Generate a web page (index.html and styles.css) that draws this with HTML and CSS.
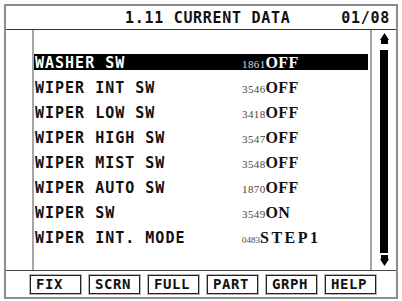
FILE: index.html
```html
<!DOCTYPE html>
<html lang="en">
<head>
    <meta charset="UTF-8">
    <title>Current Data</title>
    <link rel="stylesheet" href="styles.css">
</head>
<body>
    <div class="screen">
        <div class="header">
            <span class="title">1.11 CURRENT DATA</span>
            <span class="page">01/08</span>
        </div>

        <div class="middle">
            <div class="side"></div>

            <div class="list">
                <div class="row selected"><span class="label">WASHER SW</span><span class="value"><small>1861</small>OFF</span></div>
                <div class="row"><span class="label">WIPER INT SW</span><span class="value"><small>3546</small>OFF</span></div>
                <div class="row"><span class="label">WIPER LOW SW</span><span class="value"><small>3418</small>OFF</span></div>
                <div class="row"><span class="label">WIPER HIGH SW</span><span class="value"><small>3547</small>OFF</span></div>
                <div class="row"><span class="label">WIPER MIST SW</span><span class="value"><small>3548</small>OFF</span></div>
                <div class="row"><span class="label">WIPER AUTO SW</span><span class="value"><small>1870</small>OFF</span></div>
                <div class="row"><span class="label">WIPER SW</span><span class="value"><small>3549</small>ON</span></div>
                <div class="row"><span class="label">WIPER INT. MODE</span><span class="value"><small class="tiny">0483</small><span class="wide">STEP1</span></span></div>
            </div>

            <div class="scroll">
                <svg class="arrow" width="9" height="11" viewBox="0 0 9 11">
                    <polygon points="4.5,0 9,7 0,7" fill="#000"/>
                    <rect x="1" y="7" width="7" height="4" fill="#000"/>
                </svg>
                <div class="thumb"></div>
                <svg class="arrow" width="9" height="11" viewBox="0 0 9 11">
                    <rect x="1" y="0" width="7" height="4" fill="#000"/>
                    <polygon points="0,4 9,4 4.5,11" fill="#000"/>
                </svg>
            </div>
        </div>

        <div class="buttons">
            <span class="btn">FIX</span>
            <span class="btn">SCRN</span>
            <span class="btn">FULL</span>
            <span class="btn">PART</span>
            <span class="btn">GRPH</span>
            <span class="btn">HELP</span>
        </div>
    </div>
</body>
</html>
```

FILE: styles.css
```css
body {
    margin: 0;
    padding: 0;
    background: #fff;
    font-family: "DejaVu Sans Mono", monospace;
}
.screen {
    margin: 4px;
    width: 390px;
    height: 291px;
    border: 2px solid #8c8c8c;
    display: flex;
    flex-direction: column;
}
.header {
    height: 23px;
    border-bottom: 1px solid #333;
    display: flex;
    align-items: center;
    padding: 0 6px 0 119px;
    font-weight: bold;
    font-size: 15px;
    letter-spacing: 0.7px;
    color: #111;
}
.header .title {
    flex: 1;
}
.middle {
    height: 240px;
    display: flex;
}
.side {
    width: 26px;
    border-right: 2px solid #a5a5a5;
}
.list {
    flex: 1;
    padding: 24px 2px 0 0;
    display: flex;
    flex-direction: column;
    gap: 9px;
}
.row {
    height: 16px;
    display: grid;
    grid-template-columns: 207px auto;
    align-items: center;
    padding-left: 1px;
    color: #111;
}
.row.selected {
    background: #000;
    color: #fff;
}
.label {
    font-weight: bold;
    font-size: 15px;
    letter-spacing: 1px;
}
.value {
    font-family: "Liberation Serif", serif;
    font-weight: bold;
    font-size: 16px;
    letter-spacing: 0.3px;
}
.value small {
    font-size: 11px;
    font-weight: normal;
    letter-spacing: 0.4px;
    color: #444;
}
.row.selected .value small {
    color: #ddd;
}
.value small.tiny {
    font-size: 9px;
    letter-spacing: 0;
}
.value .wide {
    letter-spacing: 2.5px;
}
.scroll {
    width: 24px;
    border-left: 2px solid #a5a5a5;
    display: flex;
    flex-direction: column;
    align-items: center;
    padding-top: 3px;
}
.arrow {
    display: block;
}
.thumb {
    width: 8px;
    height: 203px;
    margin: 6px 0 2px;
    background: #000;
}
.buttons {
    flex: 1;
    border-top: 1px solid #444;
    display: flex;
    align-items: center;
    gap: 8px;
    padding-left: 24px;
}
.btn {
    width: 44px;
    height: 17px;
    padding-left: 5px;
    border: 1px solid #222;
    box-shadow: 0 0 0 1px #b5b5b5;
    font-weight: bold;
    font-size: 14px;
    line-height: 17px;
    letter-spacing: 0.6px;
    color: #111;
}
```
